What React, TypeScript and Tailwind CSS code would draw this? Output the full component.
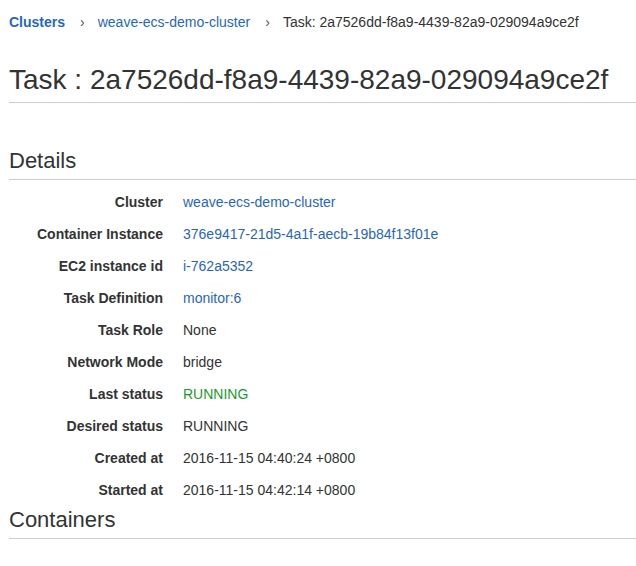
import React from 'react';

type Row = { label: string; value: string; kind?: 'link' | 'ok' };

const rows: Row[] = [
  { label: 'Cluster', value: 'weave-ecs-demo-cluster', kind: 'link' },
  { label: 'Container Instance', value: '376e9417-21d5-4a1f-aecb-19b84f13f01e', kind: 'link' },
  { label: 'EC2 instance id', value: 'i-762a5352', kind: 'link' },
  { label: 'Task Definition', value: 'monitor:6', kind: 'link' },
  { label: 'Task Role', value: 'None' },
  { label: 'Network Mode', value: 'bridge' },
  { label: 'Last status', value: 'RUNNING', kind: 'ok' },
  { label: 'Desired status', value: 'RUNNING' },
  { label: 'Created at', value: '2016-11-15 04:40:24 +0800' },
  { label: 'Started at', value: '2016-11-15 04:42:14 +0800' },
];

export default function App() {
  return (
    <div className="min-h-[566px] bg-white pl-[9px] pt-[12px] text-[#333] font-['Liberation_Sans',Arial,sans-serif]">
      {/* Breadcrumb */}
      <nav className="flex items-center text-[14px] leading-5">
        <a className="font-bold text-[#1f67c0]">Clusters</a>
        <span className="ml-[15px] mr-[13px] text-[#555]">›</span>
        <a className="text-[#1f67c0]">weave-ecs-demo-cluster</a>
        <span className="ml-[15px] mr-[13px] text-[#555]">›</span>
        <span>Task: 2a7526dd-f8a9-4439-82a9-029094a9ce2f</span>
      </nav>

      <h1 className="mt-[33px] border-b border-[#ccc] pb-[6px] text-[28px] leading-[1.1]">
        Task : 2a7526dd-f8a9-4439-82a9-029094a9ce2f
      </h1>

      <h3 className="mt-[46px] border-b border-[#ccc] pb-[6px] text-[22px] leading-[1.1]">Details</h3>

      <dl className="mt-[7px] grid grid-cols-[154px_1fr] gap-x-5 text-[14px]">
        {rows.map((r) => (
          <React.Fragment key={r.label}>
            <dt className="flex h-8 items-center justify-end font-bold">{r.label}</dt>
            <dd
              className={`flex h-8 items-center ${
                r.kind === 'link' ? 'text-[#1f67c0]' : r.kind === 'ok' ? 'text-[#1a9c2a]' : ''
              }`}
            >
              {r.value}
            </dd>
          </React.Fragment>
        ))}
      </dl>

      <h3 className="mt-[1px] border-b border-[#ccc] pb-[6px] text-[22px] leading-[1.1]">Containers</h3>
    </div>
  );
}
